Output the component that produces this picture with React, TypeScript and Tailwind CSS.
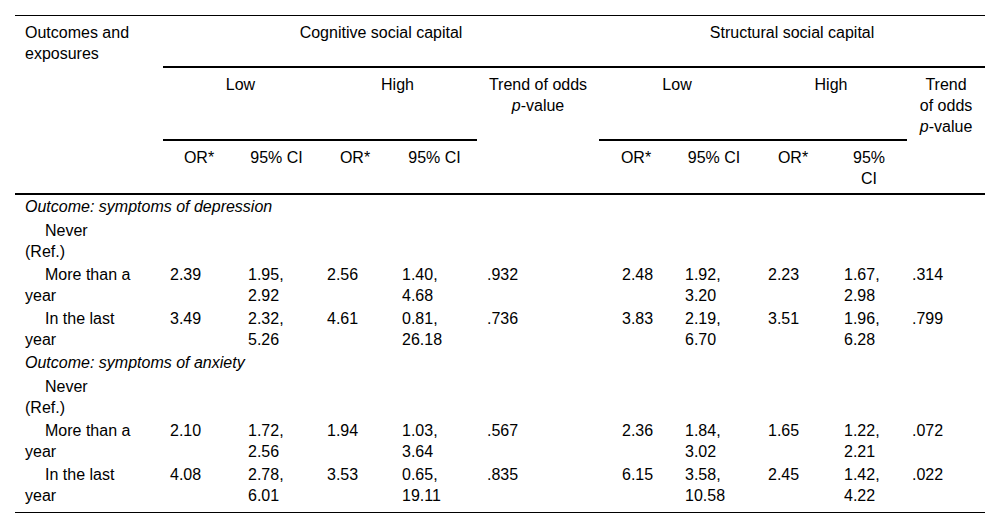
import { Fragment } from 'react'

const dataPad = [
  'pl-[10px]',
  'pl-[7px]',
  'pl-[13px]',
  'pl-[9px]',
  'pl-[10px]',
  'pl-[10px]',
  'pl-[23px]',
  'pl-[12px]',
  'pl-[13px]',
  'pl-[13px]',
  'pl-[5px]',
]

const colWidths = [148, 72, 83, 74, 85, 122, 74, 82, 76, 76, 78]

interface Block {
  outcome: string
  rows: { label: [string, string]; values: string[] }[]
}

const blocks: Block[] = [
  {
    outcome: 'Outcome: symptoms of depression',
    rows: [
      { label: ['Never', '(Ref.)'], values: [] },
      {
        label: ['More than a', 'year'],
        values: ['2.39', '1.95, 2.92', '2.56', '1.40, 4.68', '.932', '2.48', '1.92, 3.20', '2.23', '1.67, 2.98', '.314'],
      },
      {
        label: ['In the last', 'year'],
        values: ['3.49', '2.32, 5.26', '4.61', '0.81, 26.18', '.736', '3.83', '2.19, 6.70', '3.51', '1.96, 6.28', '.799'],
      },
    ],
  },
  {
    outcome: 'Outcome: symptoms of anxiety',
    rows: [
      { label: ['Never', '(Ref.)'], values: [] },
      {
        label: ['More than a', 'year'],
        values: ['2.10', '1.72, 2.56', '1.94', '1.03, 3.64', '.567', '2.36', '1.84, 3.02', '1.65', '1.22, 2.21', '.072'],
      },
      {
        label: ['In the last', 'year'],
        values: ['4.08', '2.78, 6.01', '3.53', '0.65, 19.11', '.835', '6.15', '3.58, 10.58', '2.45', '1.42, 4.22', '.022'],
      },
    ],
  },
]

// header cell: centred, top aligned, 2px rule underneath
const th = 'align-top text-center font-normal px-[10px] pt-[6px] border-b-2 border-black'

export default function App() {
  return (
    <div className="min-h-screen bg-white pt-[15px] px-[15px] text-black font-['Liberation_Sans','Arial',sans-serif] text-[16px] leading-[21px]">
      <table className="table-fixed w-[970px] border-separate border-spacing-0 border-t border-b border-black">
        <colgroup>
          {colWidths.map((w, i) => (
            <col key={i} style={{ width: w }} />
          ))}
        </colgroup>
        <thead>
          <tr className="h-[52px]">
            <th rowSpan={3} className="align-top text-left font-normal pl-[10px] pr-[10px] pt-[6px] border-b-2 border-black">
              Outcomes and exposures
            </th>
            <th colSpan={5} className={th}>
              Cognitive social capital
            </th>
            <th colSpan={5} className={th}>
              Structural social capital
            </th>
          </tr>
          <tr className="h-[73px]">
            <th colSpan={2} className={th}>Low</th>
            <th colSpan={2} className={th}>High</th>
            <th rowSpan={2} className={th}>
              Trend of odds
              <br />
              <i>p</i>-value
            </th>
            <th colSpan={2} className={th}>Low</th>
            <th colSpan={2} className={th}>High</th>
            <th rowSpan={2} className={th}>
              Trend
              <br />
              of odds
              <br />
              <i>p</i>-value
            </th>
          </tr>
          <tr className="h-[54px]">
            <th className={th}>OR*</th>
            <th className={th}>95% CI</th>
            <th className={th}>OR*</th>
            <th className={th}>95% CI</th>
            <th className={th}>OR*</th>
            <th className={th}>95% CI</th>
            <th className={th}>OR*</th>
            <th className={th}>
              95%
              <br />
              CI
            </th>
          </tr>
        </thead>
        <tbody>
          {blocks.map((block, bi) => (
            <Fragment key={bi}>
              <tr>
                <td colSpan={11} className="pl-[10px] pt-px pb-[2px] italic">
                  {block.outcome}
                </td>
              </tr>
              {block.rows.map((row, ri) => {
                const last = bi === blocks.length - 1 && ri === block.rows.length - 1
                const pad = last ? 'pt-px pb-[6px]' : 'py-px'
                return (
                  <tr key={ri}>
                    <td className={`align-top pl-[10px] pr-[10px] ${pad}`}>
                      <span className="pl-5">{row.label[0]}</span>
                      <br />
                      {row.label[1]}
                    </td>
                    {Array.from({ length: 10 }).map((_, ci) => (
                      <td key={ci} className={`align-top text-left pr-[10px] ${dataPad[ci + 1]} ${pad}`}>
                        {row.values[ci] ?? ''}
                      </td>
                    ))}
                  </tr>
                )
              })}
            </Fragment>
          ))}
        </tbody>
      </table>
    </div>
  )
}
